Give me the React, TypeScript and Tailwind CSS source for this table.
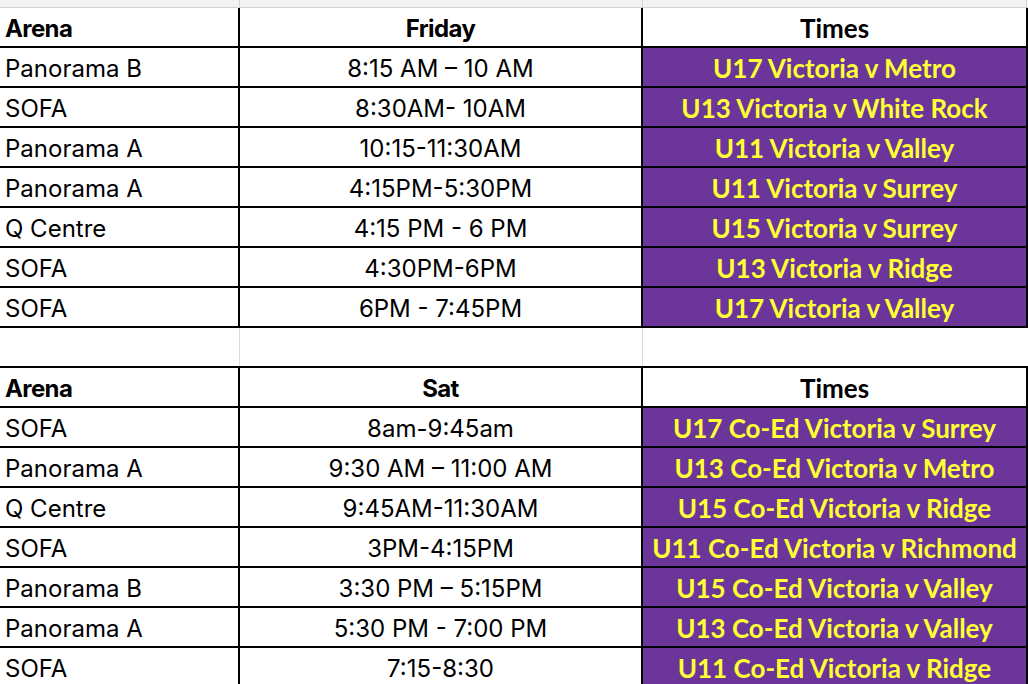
import React from "react";

type Row = { arena: string; time: string; game: string };

const friday: Row[] = [
  { arena: "Panorama B", time: "8:15 AM – 10 AM", game: "U17 Victoria v Metro" },
  { arena: "SOFA", time: "8:30AM- 10AM", game: "U13 Victoria v White Rock" },
  { arena: "Panorama A", time: "10:15-11:30AM", game: "U11 Victoria v Valley" },
  { arena: "Panorama A", time: "4:15PM-5:30PM", game: "U11 Victoria v Surrey" },
  { arena: "Q Centre", time: "4:15 PM - 6 PM", game: "U15 Victoria v Surrey" },
  { arena: "SOFA", time: "4:30PM-6PM", game: "U13 Victoria v Ridge" },
  { arena: "SOFA", time: "6PM - 7:45PM", game: "U17 Victoria v Valley" },
];

const saturday: Row[] = [
  { arena: "SOFA", time: "8am-9:45am", game: "U17 Co-Ed Victoria v Surrey" },
  { arena: "Panorama A", time: "9:30 AM – 11:00 AM", game: "U13 Co-Ed Victoria v Metro" },
  { arena: "Q Centre", time: "9:45AM-11:30AM", game: "U15 Co-Ed Victoria v Ridge" },
  { arena: "SOFA", time: "3PM-4:15PM", game: "U11 Co-Ed Victoria v Richmond" },
  { arena: "Panorama B", time: "3:30 PM – 5:15PM", game: "U15 Co-Ed Victoria v Valley" },
  { arena: "Panorama A", time: "5:30 PM - 7:00 PM", game: "U13 Co-Ed Victoria v Valley" },
  { arena: "SOFA", time: "7:15-8:30", game: "U11 Co-Ed Victoria v Ridge" },
];

const body = "font-['Inter','Liberation_Sans',sans-serif]";
const cal = "font-['Lato','Open_Sans',sans-serif]";

function Header({ day, top }: { day: string; top?: boolean }) {
  return (
    <div className={`flex border-b-2 border-black ${top ? "border-t-2 h-[42px]" : "h-[40px]"}`}>
      <div className={`w-[240px] border-r-2 border-black flex items-center pt-[3px] pl-[5px] text-[24px] font-bold tracking-[-0.6px] ${body}`}>
        Arena
      </div>
      <div className={`w-[403px] border-r-2 border-black flex items-center justify-center pt-[3px] text-[24px] font-bold tracking-[-0.6px] ${body}`}>
        {day}
      </div>
      <div className={`w-[385px] border-r-2 border-black flex items-center justify-center pt-[3px] text-[26px] font-bold ${cal}`}>
        Times
      </div>
    </div>
  );
}

function DataRow({ r }: { r: Row }) {
  return (
    <div className="flex h-[40px] border-b-2 border-black">
      <div className={`w-[240px] border-r-2 border-black flex items-center pt-[3px] pl-[5px] text-[24px] ${body}`}>
        {r.arena}
      </div>
      <div className={`w-[403px] border-r-2 border-black flex items-center justify-center pt-[3px] text-[24px] ${body}`}>
        {r.time}
      </div>
      <div className={`w-[385px] border-r-2 border-black bg-[#6b3599] flex items-center justify-center pt-[3px] text-[26px] font-bold text-[#ffff33] whitespace-nowrap ${cal}`}>
        {r.game}
      </div>
    </div>
  );
}

export default function App() {
  return (
    <div className="w-[1028px] h-[684px] overflow-hidden bg-white text-black">
      {/* spreadsheet column strip */}
      <div className="flex h-[8px] bg-[#f3f3f3] border-b border-[#d4d4d4]">
        <div className="w-[240px] border-r border-[#d4d4d4]" />
        <div className="w-[403px] border-r border-[#d4d4d4]" />
        <div className="w-[384px] border-r border-[#d4d4d4]" />
      </div>

      <Header day="Friday" />
      {friday.map((r, i) => (
        <DataRow key={i} r={r} />
      ))}

      {/* empty spacer row */}
      <div className="flex h-[38px]">
        <div className="w-[240px] border-r border-[#dcdcdc]" />
        <div className="w-[403px] border-r border-[#dcdcdc]" />
        <div className="w-[385px]" />
      </div>

      <Header day="Sat" top />
      {saturday.map((r, i) => (
        <DataRow key={i} r={r} />
      ))}
    </div>
  );
}
